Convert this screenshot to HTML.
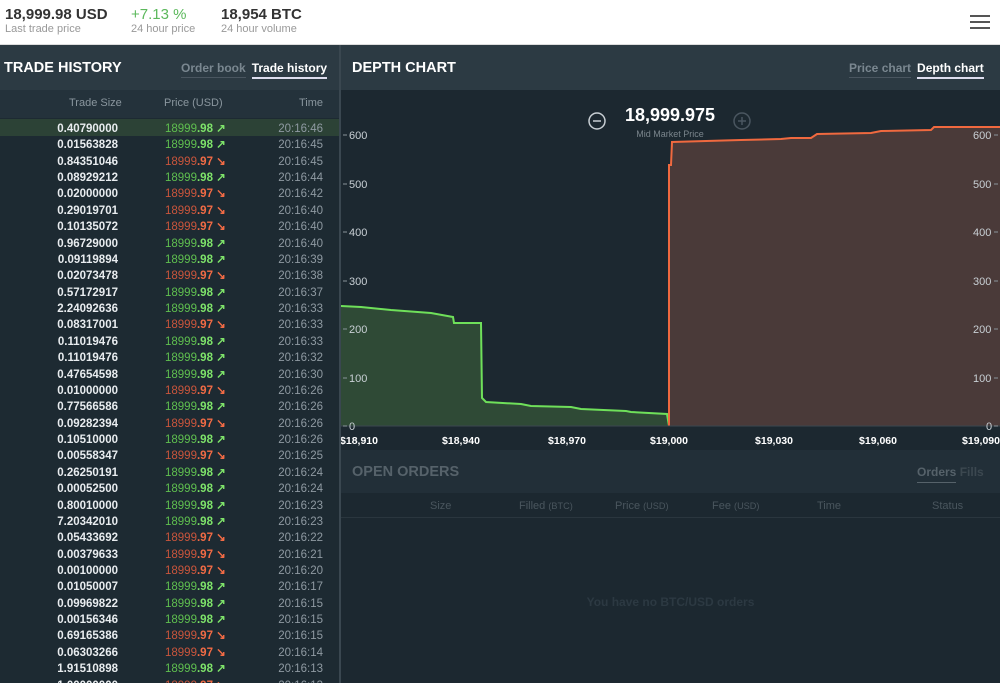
<!DOCTYPE html><html style="overflow:hidden;height:683px"><head><meta charset="utf-8"><style>
*{margin:0;padding:0;box-sizing:border-box}
body{width:1000px;height:683px;overflow:hidden;background:#1e2a33;font-family:"Liberation Sans",sans-serif;position:relative}
.top{position:absolute;left:0;top:0;width:1000px;height:45px;background:#fff;border-bottom:1px solid #ddd}
.st{position:absolute;top:6px}
.st b{display:block;font-size:15px;color:#333;font-weight:bold}
.st span{display:block;font-size:11px;color:#999;margin-top:0}
.lp{position:absolute;left:0;top:45px;width:339px;height:638px;background:#1d2a32}
.hd{position:absolute;height:45px;background:#2c3a43;color:#fff;font-weight:bold;font-size:14.5px}
.hd .t{position:absolute;left:4px;top:15px}
.tabs{position:absolute;top:16px;font-size:12px;font-weight:bold}
.tabs span{padding-bottom:2px;margin-left:6px;border-bottom:1px solid #4a5660;color:#7a8790}
.tabs span.a{color:#fff;border-bottom:2px solid #dde}
.ch{position:absolute;left:0;top:90px;width:339px;height:28px;background:#24323b;color:#8a969e;font-size:11px}
.rows{position:absolute;left:0;top:121px;width:339px;height:562px;overflow:hidden}
.r{height:16px;font-size:11.5px;position:absolute;left:0;width:339px;line-height:16px}
.r .s{position:absolute;right:221px;color:#e8ecef;font-weight:bold}
.r .p{position:absolute;left:165px}
.r .tm{position:absolute;right:16px;color:#8f9aa2}
.g{color:#5fbf4f}.g b{color:#7ee36a}.o{color:#c9553c}.o b{color:#f26b45}
.rp{position:absolute;left:341px;top:45px;width:659px;height:638px;background:#1c2830}
</style></head><body>
<div class="top">
<div class="st" style="left:5px"><b>18,999.98 USD</b><span>Last trade price</span></div>
<div class="st" style="left:131px"><b style="color:#5cb85c;font-weight:normal">+7.13 %</b><span>24 hour price</span></div>
<div class="st" style="left:221px"><b>18,954 BTC</b><span>24 hour volume</span></div>
<div style="position:absolute;left:964px;top:15px;width:26px">
<div style="height:2px;background:#555;margin-bottom:4px;margin-left:6px"></div><div style="height:2px;background:#555;margin-bottom:4px;margin-left:6px"></div><div style="height:2px;background:#555;margin-left:6px"></div></div>
</div>
<div class="lp"></div>
<div class="hd" style="left:0;top:45px;width:339px"><div class="t">TRADE HISTORY</div><div class="tabs" style="left:175px"><span>Order book</span><span class="a">Trade history</span></div></div>
<div class="ch"><span style="position:absolute;left:69px;top:7px">Trade Size</span><span style="position:absolute;left:164px;top:7px">Price (USD)</span><span style="position:absolute;right:16px;top:7px">Time</span></div>
<div style="position:absolute;left:0;top:119px;width:339px;height:17px;background:#2c4236"></div>
<div class="rows" id="rows"></div>
<div style="position:absolute;left:339px;top:45px;width:2px;height:638px;background:#3a4750"></div>
<div class="rp"></div>
<div class="hd" style="left:341px;top:45px;width:659px"><div class="t" style="left:11px">DEPTH CHART</div><div class="tabs" style="left:502px"><span>Price chart</span><span class="a">Depth chart</span></div></div>
<svg style="position:absolute;left:341px;top:90px" width="659" height="360" font-family="Liberation Sans" font-size="11">
<rect width="659" height="360" fill="#1c2830"/>
<path d="M0 216 L20 217 L50 220 L90 223 L112 227 L113 233 L140 233 L141 308 L145 312 L180 314 L190 316 L230 317 L240 319 L285 321 L290 322 L328 324 L328 336 L0 336Z" fill="#2f4a36"/>
<path d="M0 216 L20 217 L50 220 L90 223 L112 227 L113 233 L140 233 L141 308 L145 312 L180 314 L190 316 L230 317 L240 319 L285 321 L290 322 L326 324 L328 336" fill="none" stroke="#6fe05a" stroke-width="2"/>
<path d="M328 336 L328 75 L330 75 L331 52 L400 50 L440 49 L450 48 L470 48 L476 44 L530 43 L540 41 L590 40 L593 37 L659 37 L659 336Z" fill="#4a3a39"/>
<path d="M328 336 L328 75 L330 75 L331 52 L400 50 L440 49 L450 48 L470 48 L476 44 L530 43 L540 41 L590 40 L593 37 L659 37" fill="none" stroke="#f0693f" stroke-width="2"/>
<line x1="0" y1="336" x2="659" y2="336" stroke="#3b4750"/>
<g stroke="#8a949a"><path d="M2 45h4M2 94h4M2 142h4M2 191h4M2 239h4M2 288h4M2 336h4M653 45h4M653 94h4M653 142h4M653 191h4M653 239h4M653 288h4M653 336h4"/></g>
<g fill="#c8cfd4">
<text x="8" y="49">600</text><text x="8" y="98">500</text><text x="8" y="146">400</text><text x="8" y="195">300</text><text x="8" y="243">200</text><text x="8" y="292">100</text><text x="8" y="340">0</text>
<text x="632" y="49">600</text><text x="632" y="98">500</text><text x="632" y="146">400</text><text x="632" y="195">300</text><text x="632" y="243">200</text><text x="632" y="292">100</text><text x="645" y="340">0</text>
</g>
<g fill="#fff" font-weight="bold" font-size="10.5" text-anchor="middle">
<text x="18" y="354">$18,910</text><text x="120" y="354">$18,940</text><text x="226" y="354">$18,970</text><text x="328" y="354">$19,000</text><text x="433" y="354">$19,030</text><text x="537" y="354">$19,060</text><text x="640" y="354">$19,090</text></g>
<circle cx="256" cy="31" r="8" fill="none" stroke="#c8cfd4" stroke-width="1.5"/><line x1="252" y1="31" x2="260" y2="31" stroke="#c8cfd4" stroke-width="1.5"/>
<circle cx="401" cy="31" r="8" fill="none" stroke="#4a5660" stroke-width="1.5"/><path d="M397 31h8M401 27v8" stroke="#4a5660" stroke-width="1.5"/>
<text x="329" y="31" fill="#fff" font-size="18" font-weight="bold" text-anchor="middle">18,999.975</text>
<text x="329" y="47" fill="#7a858c" font-size="9" text-anchor="middle">Mid Market Price</text>
</svg>
<div style="position:absolute;left:341px;top:450px;width:659px;height:43px;background:#222f38"><div style="position:absolute;left:11px;top:14px;color:#56626a;font-weight:bold;font-size:14.5px">OPEN ORDERS</div>
<div style="position:absolute;left:576px;top:15px;font-size:12px;font-weight:bold"><span style="color:#56626a;border-bottom:1px solid #56626a;padding-bottom:3px">Orders</span> <span style="color:#3c4850">Fills</span></div></div>
<div style="position:absolute;left:341px;top:493px;width:659px;height:25px;border-bottom:1px solid #2a363e;color:#4a565e;font-size:11px">
<span style="position:absolute;left:89px;top:7px">Size</span><span style="position:absolute;left:178px;top:7px">Filled <small>(BTC)</small></span><span style="position:absolute;left:274px;top:7px">Price <small>(USD)</small></span><span style="position:absolute;left:371px;top:7px">Fee <small>(USD)</small></span><span style="position:absolute;left:476px;top:7px">Time</span><span style="position:absolute;left:591px;top:7px">Status</span></div>
<div style="position:absolute;left:341px;top:595px;width:659px;text-align:center;color:#2c3942;font-size:12px;font-weight:bold">You have no BTC/USD orders</div>
<script>
var d="0.40790000 g 46,0.01563828 g 45,0.84351046 o 45,0.08929212 g 44,0.02000000 o 42,0.29019701 o 40,0.10135072 o 40,0.96729000 g 40,0.09119894 g 39,0.02073478 o 38,0.57172917 g 37,2.24092636 g 33,0.08317001 o 33,0.11019476 g 33,0.11019476 g 32,0.47654598 g 30,0.01000000 o 26,0.77566586 g 26,0.09282394 o 26,0.10510000 g 26,0.00558347 o 25,0.26250191 g 24,0.00052500 g 24,0.80010000 g 23,7.20342010 g 23,0.05433692 o 22,0.00379633 o 21,0.00100000 o 20,0.01050007 g 17,0.09969822 g 15,0.00156346 g 15,0.69165386 o 15,0.06303266 o 14,1.91510898 g 13,1.00000000 o 13".split(","),h="";
d.forEach(function(x,i){var a=x.split(" ");var g=a[1]=="g";h+='<div class="r" style="top:'+Math.round(i*16.37)+'px"><span class="s">'+a[0]+'</span><span class="p '+a[1]+'">18999<b>.'+(g?'98 ↗':'97 ↘')+'</b></span><span class="tm">20:16:'+a[2]+'</span></div>';});
document.getElementById("rows").innerHTML=h;
</script>
</body></html>
